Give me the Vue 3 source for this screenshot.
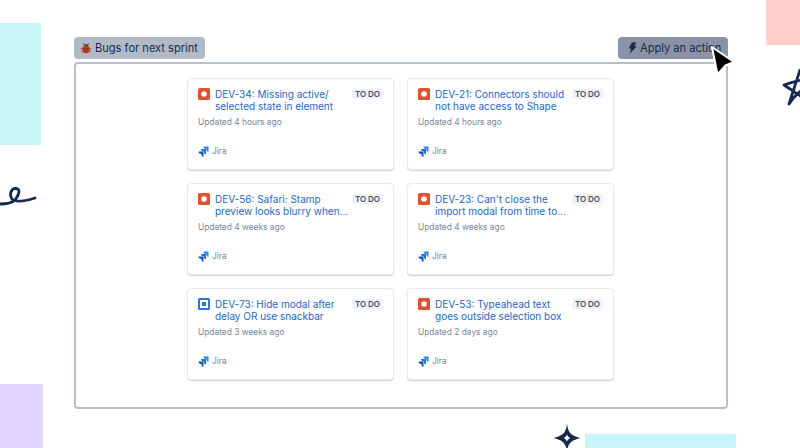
<script setup>
const cards = [
  { id: 1, icon: 'bug', lines: ['DEV-34: Missing active/', 'selected state in element'], time: 'Updated 4 hours ago' },
  { id: 2, icon: 'bug', lines: ['DEV-21: Connectors should', 'not have access to Shape'], time: 'Updated 4 hours ago' },
  { id: 3, icon: 'bug', lines: ['DEV-56: Safari: Stamp', 'preview looks blurry when...'], time: 'Updated 4 weeks ago' },
  { id: 4, icon: 'bug', lines: ["DEV-23: Can't close the", 'import modal from time to...'], time: 'Updated 4 weeks ago' },
  { id: 5, icon: 'task', lines: ['DEV-73: Hide modal after', 'delay OR use snackbar'], time: 'Updated 3 weeks ago' },
  { id: 6, icon: 'bug', lines: ['DEV-53: Typeahead text', 'goes outside selection box'], time: 'Updated 2 days ago' },
]
</script>

<template>
  <div class="page">
    <div class="deco cyan-left"></div>
    <div class="deco pink"></div>
    <div class="deco lavender"></div>
    <div class="deco cyan-bottom"></div>

    <svg class="deco squiggle" width="40" height="34" viewBox="0 0 40 34" fill="none">
      <path d="M0 28C6 28 12 27 15 24C19 19 21 13 16 12.500C11 12 9 19 12 23C15 27 25 25 35 22" stroke="#16294f" stroke-width="2.800" stroke-linecap="round"/>
    </svg>
    <svg class="deco star" width="20" height="38" viewBox="0 0 20 38" fill="none">
      <path d="M18 1L7 35C10 30 15 25 20 21M20 11C14 12 8 14 2 16C8 20 14 24 20 28" stroke="#16294f" stroke-width="2.800" stroke-linecap="round" stroke-linejoin="round"/>
    </svg>
    <svg class="deco sparkle" width="28" height="30" viewBox="0 0 28 30">
      <path d="M14 0C14.800 9 17 12.500 27.500 15C17 17.500 14.800 21 14 30C13.200 21 11 17.500 0.500 15C11 12.500 13.200 9 14 0ZM14 11.500C13.400 13 12.500 14.200 10.800 15C12.500 15.800 13.400 17 14 18.500C14.600 17 15.500 15.800 17.200 15C15.500 14.200 14.600 13 14 11.500Z" fill="#16294f" fill-rule="evenodd"/>
    </svg>

    <div class="header">
      <div class="tag tag-bugs">
        <svg class="icon" width="12" height="12" viewBox="0 0 12 12">
          <path d="M3 1L4.500 3.500M9 1L7.500 3.500" stroke="#5a4a44" stroke-width="0.900"/>
          <path d="M0.500 6.500H3M9 6.500H11.500M1 10L3 8.500M11 10L9 8.500" stroke="#6b5a50" stroke-width="0.800"/>
          <circle cx="6" cy="4" r="2" fill="#4b3a35"/>
          <circle cx="6" cy="7.300" r="3.900" fill="#c63d1d"/>
          <circle cx="4.500" cy="7" r="0.700" fill="#3a201a"/>
          <circle cx="7.500" cy="7" r="0.700" fill="#3a201a"/>
          <circle cx="6" cy="9.300" r="0.700" fill="#3a201a"/>
        </svg>
        <span>Bugs for next sprint</span>
      </div>
      <div class="tag tag-action">
        <svg class="icon" width="11" height="12" viewBox="0 0 11 12"><path d="M5 0.500H9.500L7.200 4.200H10L2.500 11.800L4.300 6.500H1.500Z" fill="#16294f"/></svg>
        <span>Apply an action</span>
      </div>
    </div>

    <div class="frame">
      <div class="grid">
        <article v-for="c in cards" :key="c.id" class="card">
          <div class="top">
            <svg v-if="c.icon === 'bug'" class="type" width="12" height="12" viewBox="0 0 12 12">
              <rect width="12" height="12" rx="1.500" fill="#e5502f"/>
              <circle cx="6" cy="6" r="2.800" fill="#fff"/>
            </svg>
            <svg v-else class="type" width="12" height="12" viewBox="0 0 12 12">
              <rect width="12" height="12" rx="1.500" fill="#2f74de"/>
              <rect x="2" y="2" width="8" height="8" rx="0.500" fill="#fff"/>
              <rect x="4" y="4" width="4" height="4" fill="#2f74de"/>
            </svg>
            <a class="title"><span v-for="l in c.lines" :key="l" class="line">{{ l }}</span></a>
            <span class="status">TO DO</span>
          </div>
          <div class="time">{{ c.time }}</div>
          <div class="source">
            <svg width="11" height="11" viewBox="0 0 11 11">
              <path d="M10.500 0.500H5.500C5.500 2 6.500 3 8 3H8.500V4C8.500 5 9.500 5.800 10.500 5.800Z" fill="#2684ff"/>
              <path d="M8 3H3C3 4.500 4 5.500 5.500 5.500H6V6.500C6 7.500 7 8.300 8 8.300V3Z" fill="#1f6fe0"/>
              <path d="M5.500 5.500H0.500C0.500 7 1.500 8 3 8H3.500V9C3.500 10 4.500 10.800 5.500 10.800Z" fill="#0e55c4"/>
            </svg>
            <span>Jira</span>
          </div>
        </article>
      </div>
    </div>

    <svg class="deco cursor" width="27" height="33" viewBox="0 0 27 33">
      <path d="M3 3L25 18L16.500 21.500L8.500 30.500Z" fill="#000" stroke="#fff" stroke-width="2" stroke-linejoin="round"/>
    </svg>
  </div>
</template>

<style>
html, body { margin: 0; background: #fff; }
</style>

<style scoped>
.page {
  position: relative;
  width: 800px;
  height: 448px;
  overflow: hidden;
  background: #fff;
  box-sizing: border-box;
  padding: 37px 72px 0 74px;
  font-family: Inter, "Liberation Sans", sans-serif;
}
.deco { position: absolute; display: block; }
.cyan-left { left: 0; top: 23px; width: 41px; height: 122px; background: #c7f5f8; }
.pink { left: 766px; top: 0; width: 34px; height: 45px; background: #ffd0ca; }
.lavender { left: 0; top: 384px; width: 43px; height: 64px; background: #dfd5fd; }
.cyan-bottom { left: 585px; top: 434px; width: 151px; height: 14px; background: #c7f5f8; }
.squiggle { left: 0; top: 176px; }
.star { left: 782px; top: 69px; }
.sparkle { left: 553px; top: 423px; }
.cursor { left: 709px; top: 44px; z-index: 3; }

.header {
  display: flex;
  justify-content: space-between;
  align-items: center;
  height: 22px;
}
.tag {
  display: flex;
  align-items: center;
  height: 22px;
  border-radius: 4px;
  font-size: 11.100px;
  color: #172b4d;
  box-sizing: border-box;
  white-space: nowrap;
  overflow: hidden;
}
.icon { flex: none; }
.tag-bugs { background: #b3bac7; padding-left: 6px; gap: 3px; width: 131px; }
.tag-action { background: #8993a5; padding-left: 9px; gap: 2px; width: 110px; }
.frame {
  margin-top: 3px;
  width: 654px;
  height: 347px;
  box-sizing: border-box;
  border: 2px solid #b8bfcc;
  border-radius: 4px;
  padding-top: 14px;
  background: #fff;
}
.grid {
  display: grid;
  grid-template-columns: 207px 207px;
  grid-auto-rows: 92px;
  column-gap: 13px;
  row-gap: 13px;
  justify-content: center;
  margin-left: -1px;
}
.card {
  box-sizing: border-box;
  background: #fff;
  border-radius: 4px;
  border: 1px solid #e9ebef;
  box-shadow: 0 1px 1px rgba(9, 30, 66, 0.2);
  padding: 7px 10px 0 10px;
  display: flex;
  flex-direction: column;
}
.top { display: flex; align-items: flex-start; height: 28px; }
.type { flex: none; margin-top: 2px; margin-right: 5px; }
.title {
  flex: 1;
  min-width: 0;
  font-size: 10px;
  line-height: 12px;
  color: #2168d6;
  margin-top: 2px;
}
.line { display: block; white-space: nowrap; }
.status {
  flex: none;
  font-size: 8px;
  line-height: 10px;
  font-weight: 600;
  color: #42526e;
  background: #eff1f4;
  border-radius: 2px;
  padding: 0 3px;
  margin-top: 3px;
}
.time { margin-top: 3px; font-size: 8.400px; line-height: 11px; color: #7a869a; }
.source {
  display: flex;
  align-items: center;
  gap: 3px;
  margin-top: 17px;
  font-size: 8.400px;
  line-height: 12px;
  color: #7a869a;
}
</style>
